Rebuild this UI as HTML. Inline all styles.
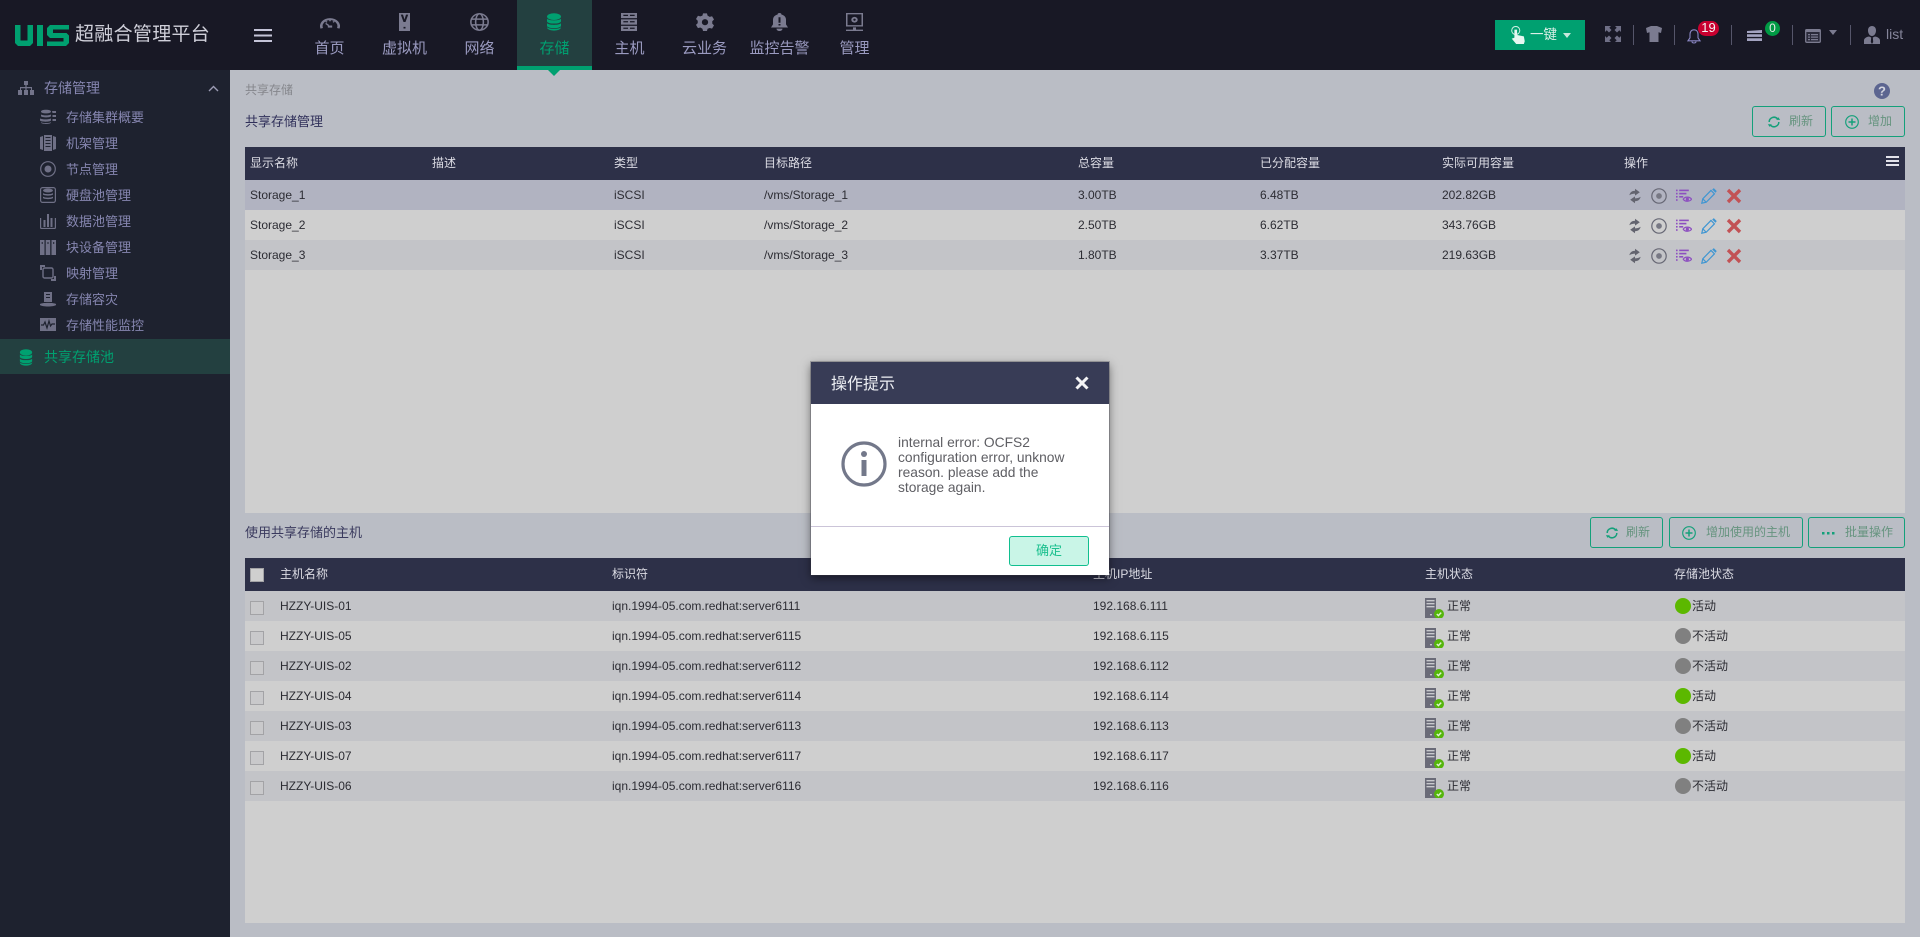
<!DOCTYPE html>
<html lang="zh"><head><meta charset="utf-8"><title>共享存储</title>
<style>
html,body{margin:0;padding:0;width:1920px;height:937px;overflow:hidden;background:#babdc5;font-family:"Liberation Sans","Noto Sans CJK SC",sans-serif;font-size:12px;color:#2c2c33}
div,span,svg{position:absolute;display:block}
.t{white-space:nowrap}
#hd{left:0;top:0;width:1920px;height:70px;background:#181825}
.nav{top:0;width:75px;height:70px;text-align:center;color:#9a9ac0;font-size:15px}
.nav span{left:0;width:75px;top:37px;line-height:23px}
.nav svg{top:13px;height:18px;fill:#7b7b90}
.sep{top:25px;width:1px;height:20px;background:#55556a}
#sb{left:0;top:70px;width:230px;height:867px;background:#1e222f}
.si{left:66px;color:#8686b0;font-size:13px;line-height:20px;white-space:nowrap}
.sic{left:40px;width:16px;height:16px;fill:#6f7086;color:#6f7086}
.th{left:245px;width:1660px;height:33px;background:#2d3048;color:#dcdce4}
.th span{top:0;line-height:32px;white-space:nowrap}
.r{left:245px;width:1660px;height:30px}
.r span{top:0;line-height:31px;white-space:nowrap}
.a{background:#c3c4c8}.b{background:#cfcfcf}
.btn{height:29px;border:1px solid #14a07a;border-radius:3px;color:#66947f;font-size:12px;box-sizing:content-box}
.btn span{top:0;line-height:29px;white-space:nowrap}
.btn svg{top:8px;width:14px;height:14px}
.cb{left:5px;top:10px;width:12px;height:12px;border:1px solid #a3a3a6;background:#c9c9cb}
.ic{top:8px;width:16px;height:16px}
.st{top:7px;width:20px;height:20px}
.dot{left:1429.5px;top:7px;width:16px;height:16px;border-radius:50%}
.g{background:#5cb800}.k{background:#808080}
</style></head><body>
<svg width="0" height="0" style="left:0;top:0">
<defs>
<symbol id="sync" viewBox="0 0 20 20"><path fill="#63646f" d="M3 9c.6-3.600 3.500-5.600 7-5.600V1l6 4.300-6 4.200V7C7.500 7 5 7.600 3 9zM17 11c-.6 3.600-3.500 5.600-7 5.600V19l-6-4.300 6-4.200V13c2.500 0 5-.6 7-2z"/></symbol>
<symbol id="circ" viewBox="0 0 20 20"><circle cx="10" cy="10" r="9" fill="none" stroke="#666774" stroke-width="1.500"/><circle cx="10" cy="10" r="3.600" fill="#777884"/></symbol>
<symbol id="leye" viewBox="0 0 20 20"><g fill="#8d4fc0"><rect x="0" y="2" width="2" height="2"/><rect x="4" y="2" width="12" height="2"/><rect x="0" y="6" width="2" height="2"/><rect x="4" y="6" width="9" height="2"/><rect x="0" y="10" width="2" height="2"/><rect x="4" y="10" width="5" height="2"/><rect x="0" y="14" width="2" height="2"/></g><path fill="none" stroke="#8d4fc0" stroke-width="1.500" d="M9 14c2-3.400 8-3.400 10.500 0-2.500 3.400-8.500 3.400-10.500 0z"/><circle cx="14.200" cy="14" r="2" fill="#8d4fc0"/></symbol>
<symbol id="pen" viewBox="0 0 20 20"><path fill="none" stroke="#3f96d2" stroke-width="1.500" d="M1 19l1.200-5.500L12.500 3l4.300 4.300L6.500 17.800z M2.200 13.500L6.500 17.800"/><path fill="#3f96d2" d="M14 1.800l2-1.600 3.700 3.700-1.600 2.100z"/></symbol>
<symbol id="xx" viewBox="0 0 20 20"><path fill="none" stroke="#c25255" stroke-width="4.200" d="M2.500 2.500l15 15M17.500 2.500L2.500 17.500"/></symbol>
<symbol id="srv" viewBox="0 0 20 20"><path fill="#6a6b78" d="M0 0h11v20H0z"/><path fill="#c8c9cd" d="M1.500 2h8v1.400h-8zM1.500 5h8v1.400h-8zM1.500 8h8v1.400h-8zM5 16h2v1.400H5z"/><circle cx="14" cy="16" r="5" fill="#55b50c"/><path fill="none" stroke="#dff2cc" stroke-width="1.500" d="M11.800 16l1.600 1.600 2.800-3"/></symbol>
<symbol id="ref" viewBox="0 0 16 16"><path fill="none" stroke="#14a07a" stroke-width="1.700" d="M2.500 8a5.500 5.500 0 0 1 9.500-3.700M13.500 8A5.500 5.500 0 0 1 4 11.700"/><path fill="#14a07a" d="M10.500 5.500h4.500L13 2.500zM5.500 10.500H1l2 3z"/></symbol>
<symbol id="plus" viewBox="0 0 16 16"><circle cx="8" cy="8" r="7.200" fill="none" stroke="#14a07a" stroke-width="1.300"/><path fill="none" stroke="#14a07a" stroke-width="1.700" d="M8 4v8M4 8h8"/></symbol>
<symbol id="db" viewBox="0 0 16 16"><ellipse cx="8" cy="3.200" rx="7" ry="3"/><path d="M1 5c1 2 13 2 14 0v2.500c-1 2.500-13 2.500-14 0zM1 9c1 2 13 2 14 0v2.500c-1 2.500-13 2.500-14 0zM1 12.500c1 2 13 2 14 0v.5c-1 3.500-13 3.500-14 0z"/></symbol>
</defs></svg>

<div id="hd"></div>
<svg style="left:15px;top:25px" width="54" height="21" viewBox="0 0 54 21"><path fill="#00a070" d="M0 0h5.500v15.500h7V0H18v18l-3 3H3l-3-3zM22 0h6v21h-6zM32 3l3-3h19v4.500H38V8h13.500L54 10.500V18l-3 3H32v-4.500h16.500V13H35l-3-3z"/></svg>
<div class="t" style="left:75px;top:22px;line-height:26px;font-size:19px;letter-spacing:.3px;color:#d0d0da">超融合管理平台</div>
<svg style="left:254px;top:29px" width="18" height="13"><path fill="#c4c4d8" d="M0 0h18v2H0zM0 5.500h18v2H0zM0 11h18v2H0z"/></svg>

<div class="nav" style="left:292px"><svg style="left:28px;top:15px;width:20px;height:14px" viewBox="2 1 23 20" preserveAspectRatio="none"><path fill="none" stroke="#7b7b90" stroke-width="3" d="M4 20a10 10 0 1 1 19 0"/><path fill="none" stroke="#7b7b90" stroke-width="1.800" d="M13.500 8v2M8.500 10l1.500 1.500M18.500 10L17 11.500M12 16l-3.500-3"/><path fill="#7b7b90" d="M11 16h5v3h-5z"/></svg><span>首页</span></div>
<div class="nav" style="left:367px"><svg style="left:32px;width:11px" viewBox="8.500 1 11 22" preserveAspectRatio="none"><path fill="#7b7b90" d="M8.500 1h11v22h-11z"/><path fill="#181825" d="M10.300 3h2.200l1.500 6 1.500-6h2.200L15 12h-2zM13 18h2v2h-2z"/></svg><span>虚拟机</span></div>
<div class="nav" style="left:442px"><svg style="left:28px;width:19px" viewBox="2.500 1 22 22" preserveAspectRatio="none"><g fill="none" stroke="#7b7b90" stroke-width="1.800"><circle cx="13.500" cy="12" r="10"/><ellipse cx="13.500" cy="12" rx="4.500" ry="10"/><path d="M3.500 8.500h20M3.500 15.500h20"/></g></svg><span>网络</span></div>
<div style="left:517px;top:0;width:75px;height:70px;background:#234040"></div>
<div style="left:517px;top:66px;width:75px;height:4px;background:#00a070"></div>
<div style="left:548px;top:70px;width:0;height:0;border:6px solid transparent;border-top-color:#00a070;border-bottom:0"></div>
<div class="nav" style="left:517px;color:#00a070"><svg viewBox="0 0 16 16" style="fill:#00a070;left:29px;width:16px" preserveAspectRatio="none"><use href="#db"/></svg><span>存储</span></div>
<div class="nav" style="left:592px"><svg style="left:29px;width:16px" viewBox="5 2 17 21" preserveAspectRatio="none"><path fill="#7b7b90" d="M5 2h17v6H5zM5 9.500h17v6H5zM5 17h17v6H5z"/><path fill="#181825" d="M7.500 4h5v1.500h-5zM14.500 4h5v1.500h-5zM7.500 11.500h5V13h-5zM14.500 11.500h5V13h-5zM7.500 19h5v1.500h-5zM14.500 19h5v1.500h-5z"/></svg><span>主机</span></div>
<div class="nav" style="left:667px"><svg style="left:28.500px;width:18px" viewBox="2 0.500 23 23.500" preserveAspectRatio="none"><path fill="#7b7b90" d="M11 1h5l.8 3 2.700 1.500 3-.8 2.500 4.300-2.200 2.200v3.200l2.200 2.200-2.500 4.300-3-.8L16.800 21l-.8 3h-5l-.8-3-2.700-1.500-3 .8L2 16l2.200-2.200v-3.200L2 8.400l2.500-4.300 3 .8L10.200 4z"/><circle cx="13.500" cy="12.500" r="4" fill="#181825"/></svg><span>云业务</span></div>
<div class="nav" style="left:742px"><svg style="left:29px;width:17px" viewBox="5 1 17 23" preserveAspectRatio="none"><path fill="#7b7b90" d="M13.500 1c1.200 0 2 .8 2 2 3 .8 4.500 3.500 4.500 6.500v6l2 4H5l2-4v-6C7 6.500 8.500 3.800 11.500 3c0-1.200.8-2 2-2zM10.500 21h6c0 2-1.300 3-3 3s-3-1-3-3z"/><path fill="#181825" d="M12.500 6.500h2v7h-2zM12.500 15h2v2h-2z"/></svg><span>监控告警</span></div>
<div class="nav" style="left:817px"><svg style="left:29px;width:17px" viewBox="5 2 17 20" preserveAspectRatio="none"><path fill="#7b7b90" d="M5 2h17v15H5zM12 18h3v2.500h7V22H5v-1.500h7z"/><path fill="#181825" d="M6.500 3.500h14v12h-14z"/><circle cx="13.500" cy="9.500" r="3.200" fill="#7b7b90"/><circle cx="13.500" cy="9.500" r="1.200" fill="#181825"/></svg><span>管理</span></div>

<div style="left:1495px;top:20px;width:90px;height:30px;background:#00a070"></div>
<svg style="left:1510px;top:26px" width="16" height="18" viewBox="0 0 16 20"><circle cx="5.500" cy="5" r="4.500" fill="none" stroke="#cfeee3" stroke-width="1.100"/><path fill="#e6f7f1" d="M4 4h3v6l7.500 1.500L15.500 17l-1 3H6l-5-6 3-1z"/></svg>
<div class="t" style="left:1530px;top:24px;line-height:21px;font-size:13.500px;color:#dcefe8">一键</div>
<div style="left:1563px;top:33px;width:0;height:0;border:4px solid transparent;border-top:5px solid #c8e8dc;border-bottom:0"></div>
<svg style="left:1605px;top:26px" width="16" height="16" viewBox="0 0 16 16"><path fill="#6f6f86" d="M0 0h6L4.300 1.700 6.500 4 4 6.500 1.700 4.300 0 6zM16 0v6l-1.700-1.700L12 6.500 9.500 4l2.200-2.300L10 0zM16 16h-6l1.700-1.700L9.500 12l2.500-2.500 2.300 2.200L16 10zM0 16v-6l1.700 1.700L4 9.500 6.500 12l-2.200 2.300L6 16z"/></svg>
<div class="sep" style="left:1633px"></div>
<svg style="left:1646px;top:26px" width="16" height="16" viewBox="0 0 16 16"><path fill="#7b7b90" d="M5 0h6l5 2-1 5-2.500-.8V16H3.500V6.200L1 7 0 2z"/></svg>
<div class="sep" style="left:1674px"></div>
<svg style="left:1687px;top:29px" width="14" height="15" viewBox="0 0 14 15"><path fill="none" stroke="#8a86c4" stroke-width="1.100" d="M7 .8c2.700 0 4 2 4 4.500v3.500l2 3H1l2-3V5.300C3 2.800 4.300.8 7 .8zM5 12.500c0 2 4 2 4 0"/></svg>
<div style="left:1698px;top:21px;width:21px;height:15px;border-radius:7.500px;background:#c8002f;color:#f4f4f4;text-align:center;line-height:14px;font-size:13px">19</div>
<div class="sep" style="left:1731px"></div>
<svg style="left:1747px;top:30px" width="15" height="11" viewBox="0 0 15 11"><path fill="#a3a3c0" d="M0 1l15-1v3H0zM0 4.200h15v2.700H0zM0 8.200h15V11H0z"/></svg>
<div style="left:1765px;top:21px;width:15px;height:15px;border-radius:7.500px;background:#009a44;color:#e8e8e8;text-align:center;line-height:14px;font-size:12px">0</div>
<div class="sep" style="left:1792px"></div>
<svg style="left:1805px;top:29px" width="16" height="14" viewBox="0 0 16 14"><rect x=".7" y=".7" width="14.600" height="12.600" rx="1" fill="#2a2a3a" stroke="#7b7b90" stroke-width="1.300"/><path fill="#7b7b90" d="M1 1h14v2H1zM3 5h2v1.200H3zM6 5h7v1.200H6zM3 7.500h2v1.200H3zM6 7.500h7v1.200H6zM3 10h2v1.200H3zM6 10h7v1.200H6z"/></svg>
<div style="left:1829px;top:30px;width:0;height:0;border:4.500px solid transparent;border-top:5px solid #7b7b90;border-bottom:0"></div>
<div class="sep" style="left:1850px"></div>
<svg style="left:1864px;top:26px" width="16" height="18" viewBox="0 0 16 18"><path fill="#7b7b90" d="M8 0c2.500 0 4 1.800 4 4.500S10.500 10 8 10 4 7.200 4 4.500 5.500 0 8 0zM5 10.500l2.200 1L6.800 16l1.200 2 1.200-2-.4-4.500 2.200-1c3 .5 5 2 5 4V18H0v-3.500c0-2 2-3.500 5-4z"/></svg>
<div class="t" style="left:1886px;top:24px;line-height:20px;font-size:14px;color:#85859a">list</div>

<div id="sb"></div>
<div class="t" style="left:44px;top:78px;line-height:20px;font-size:14px;color:#8686b0">存储管理</div>
<svg style="left:18px;top:81px" width="16" height="14" viewBox="0 0 16 14" ><path fill="#73748a" d="M6 0h4v4H8.600v2H14v3h2v5h-4V9h1V7.200H8.600V9H10v5H6V9h1.400V7.200H3V9h1v5H0V9h2V6h5.400V4H6z"/></svg>
<svg style="left:208px;top:85px" width="11" height="7" viewBox="0 0 11 7"><path fill="none" stroke="#9c9cb4" stroke-width="1.400" d="M1 6l4.500-4.500L10 6"/></svg>

<svg class="sic" style="top:109px" viewBox="0 0 16 16"><path d="M6 .8c3 0 5 .8 5 1.800S9 4.400 6 4.400 1 3.600 1 2.600 3 .8 6 .8zM1 5.500c2 1.200 8 1.200 10 0v1.800c-1 1.500-9 1.500-10 0zM0 9.500c2.500 1.200 8.500 1.200 11 0v2c-1 1.600-10 1.600-11 0zM1 13.200c2 1 8 1 10 0v.6c-1 1.600-9 1.600-10 0zM12 2h4v2h-3.500zM12.500 6H16v2h-3.500zM12.500 10H16v2h-3.500z"/></svg>
<div class="si" style="top:108px">存储集群概要</div>
<svg class="sic" style="top:135px" viewBox="0 0 16 16"><path d="M0 2l3-1v14l-3-1zM16 2l-3-1v14l3-1zM4 0h8v16H4z"/><path fill="#1e222f" d="M5.500 2h5v1h-5zM5.500 5h5v1h-5zM5.500 8h5v1h-5zM5.500 11h5v1h-5z"/></svg>
<div class="si" style="top:134px">机架管理</div>
<svg class="sic" style="top:161px" viewBox="0 0 16 16"><circle cx="8" cy="8" r="7.300" fill="none" stroke="#6f7086" stroke-width="1.200"/><circle cx="8" cy="8" r="3.500"/></svg>
<div class="si" style="top:160px">节点管理</div>
<svg class="sic" style="top:187px" viewBox="0 0 16 16"><rect x=".6" y=".6" width="14.800" height="14.800" rx="2" fill="none" stroke="#6f7086" stroke-width="1.200"/><ellipse cx="8" cy="3.500" rx="5" ry="2"/><path d="M3 6c1 1.500 9 1.500 10 0v1.500c-1 1.500-9 1.500-10 0zM3 9.500c1 1.500 9 1.500 10 0V11c-1 1.500-9 1.500-10 0z"/></svg>
<div class="si" style="top:186px">硬盘池管理</div>
<svg class="sic" style="top:213px" viewBox="0 0 16 16"><path fill="none" stroke="#6f7086" stroke-width="1.200" d="M.6 5v9.500a1 1 0 0 0 1 1h12.800a1 1 0 0 0 1-1V5"/><path d="M3.500 7h2v7h-2zM7 1h2v13H7zM10.500 5h2v9h-2z"/></svg>
<div class="si" style="top:212px">数据池管理</div>
<svg class="sic" style="top:239px" viewBox="0 0 16 16"><path d="M0 1h4.500v15H0zM5.700 1h4.500v15H5.700zM11.500 1H16v15h-4.500z"/><path fill="#1e222f" d="M1.700 3h1v2h-1zM7.500 3h1v2h-1zM13.200 3h1v2h-1z"/></svg>
<div class="si" style="top:238px">块设备管理</div>
<svg class="sic" style="top:265px" viewBox="0 0 16 16"><path d="M0 0h5v2H2v3H0zM16 16h-5v-2h3v-3h2z"/><rect x="3" y="3" width="10" height="10" rx="1.500" fill="none" stroke="#6f7086" stroke-width="1.400"/></svg>
<div class="si" style="top:264px">映射管理</div>
<svg class="sic" style="top:291px" viewBox="0 0 16 16"><path d="M4 1h8v10H4z"/><path fill="#1e222f" d="M6 3h4v1H6zM6 6h4v1H6z"/><path d="M0 13c2-1.500 14-1.500 16 0v1c-2 2-14 2-16 0z"/></svg>
<div class="si" style="top:290px">存储容灾</div>
<svg class="sic" style="top:317px" viewBox="0 0 16 16"><path d="M0 1h16v13H0z"/><path fill="none" stroke="#1e222f" stroke-width="1.200" d="M1 8h2.500l1.500-3 2 6 2-7 1.500 5 1.500-2H15"/></svg>
<div class="si" style="top:316px">存储性能监控</div>

<div style="left:0;top:339px;width:230px;height:35px;background:#234040"></div>
<svg style="left:19px;top:349px;fill:#00a070" width="14" height="17" viewBox="0 0 16 16" preserveAspectRatio="none"><use href="#db"/></svg>
<div class="t" style="left:44px;top:347px;line-height:20px;font-size:14px;color:#00a070">共享存储池</div>

<div class="t" style="left:245px;top:81px;line-height:18px;color:#85868c">共享存储</div>
<svg style="left:1874px;top:83px" width="16" height="16" viewBox="0 0 16 16"><circle cx="8" cy="8" r="8" fill="#5c6590"/><text x="8" y="12.500" font-size="13" font-weight="bold" font-family="Liberation Sans" fill="#d4d6e0" text-anchor="middle">?</text></svg>
<div class="t" style="left:245px;top:112px;line-height:20px;font-size:13px;color:#30305a">共享存储管理</div>

<div class="btn" style="left:1752px;top:106px;width:72px"><svg style="left:14px"><use href="#ref"/></svg><span style="left:36px">刷新</span></div>
<div class="btn" style="left:1831px;top:106px;width:72px"><svg style="left:13px"><use href="#plus"/></svg><span style="left:36px">增加</span></div>

<div style="left:245px;top:147px;width:1660px;height:366px;background:#cfcfcf"></div>
<div class="th" style="top:147px">
<span style="left:5px">显示名称</span><span style="left:187px">描述</span><span style="left:369px">类型</span><span style="left:519px">目标路径</span><span style="left:833px">总容量</span><span style="left:1015px">已分配容量</span><span style="left:1197px">实际可用容量</span><span style="left:1379px">操作</span>
<svg style="left:1641px;top:9px" width="13" height="10"><path fill="#e2e2ea" d="M0 0h13v2H0zM0 4h13v2H0zM0 8h13v2H0z"/></svg></div>

<div class="r" style="top:180px;background:#b1b3c1"><span style="left:5px">Storage_1</span><span style="left:369px">iSCSI</span><span style="left:519px">/vms/Storage_1</span><span style="left:833px">3.00TB</span><span style="left:1015px">6.48TB</span><span style="left:1197px">202.82GB</span><svg class="ic" style="left:1381.500px"><use href="#sync"/></svg><svg class="ic" style="left:1406px"><use href="#circ"/></svg><svg class="ic" style="left:1431px"><use href="#leye"/></svg><svg class="ic" style="left:1456px"><use href="#pen"/></svg><svg class="ic" style="left:1481px"><use href="#xx"/></svg></div>
<div class="r b" style="top:210px"><span style="left:5px">Storage_2</span><span style="left:369px">iSCSI</span><span style="left:519px">/vms/Storage_2</span><span style="left:833px">2.50TB</span><span style="left:1015px">6.62TB</span><span style="left:1197px">343.76GB</span><svg class="ic" style="left:1381.500px"><use href="#sync"/></svg><svg class="ic" style="left:1406px"><use href="#circ"/></svg><svg class="ic" style="left:1431px"><use href="#leye"/></svg><svg class="ic" style="left:1456px"><use href="#pen"/></svg><svg class="ic" style="left:1481px"><use href="#xx"/></svg></div>
<div class="r a" style="top:240px"><span style="left:5px">Storage_3</span><span style="left:369px">iSCSI</span><span style="left:519px">/vms/Storage_3</span><span style="left:833px">1.80TB</span><span style="left:1015px">3.37TB</span><span style="left:1197px">219.63GB</span><svg class="ic" style="left:1381.500px"><use href="#sync"/></svg><svg class="ic" style="left:1406px"><use href="#circ"/></svg><svg class="ic" style="left:1431px"><use href="#leye"/></svg><svg class="ic" style="left:1456px"><use href="#pen"/></svg><svg class="ic" style="left:1481px"><use href="#xx"/></svg></div>

<div class="t" style="left:245px;top:523px;line-height:20px;font-size:13px;color:#3a3a5e">使用共享存储的主机</div>
<div class="btn" style="left:1590px;top:517px;width:71px"><svg style="left:14px"><use href="#ref"/></svg><span style="left:35px">刷新</span></div>
<div class="btn" style="left:1669px;top:517px;width:132px"><svg style="left:12px"><use href="#plus"/></svg><span style="left:36px">增加使用的主机</span></div>
<div class="btn" style="left:1808px;top:517px;width:95px"><svg style="left:12px"><path fill="#14a07a" d="M1 6h2.500v2.500H1zM6 6h2.500v2.500H6zM11 6h2.500v2.500H11z"/></svg><span style="left:36px">批量操作</span></div>

<div style="left:245px;top:558px;width:1660px;height:365px;background:#cfcfcf"></div>
<div class="th" style="top:558px"><div style="left:5px;top:10px;width:12px;height:12px;border:1px solid #a3a3a6;background:#cfcfcf"></div><span style="left:35px">主机名称</span><span style="left:367px">标识符</span><span style="left:848px">主机IP地址</span><span style="left:1180px">主机状态</span><span style="left:1429px">存储池状态</span></div>

<div class="r a" style="top:591px"><div class="cb"></div><span style="left:35px">HZZY-UIS-01</span><span style="left:367px">iqn.1994-05.com.redhat:server6111</span><span style="left:848px">192.168.6.111</span><svg class="st" style="left:1180px"><use href="#srv"/></svg><span style="left:1202px">正常</span><div class="dot g"></div><span style="left:1447px">活动</span></div>
<div class="r b" style="top:621px"><div class="cb"></div><span style="left:35px">HZZY-UIS-05</span><span style="left:367px">iqn.1994-05.com.redhat:server6115</span><span style="left:848px">192.168.6.115</span><svg class="st" style="left:1180px"><use href="#srv"/></svg><span style="left:1202px">正常</span><div class="dot k"></div><span style="left:1447px">不活动</span></div>
<div class="r a" style="top:651px"><div class="cb"></div><span style="left:35px">HZZY-UIS-02</span><span style="left:367px">iqn.1994-05.com.redhat:server6112</span><span style="left:848px">192.168.6.112</span><svg class="st" style="left:1180px"><use href="#srv"/></svg><span style="left:1202px">正常</span><div class="dot k"></div><span style="left:1447px">不活动</span></div>
<div class="r b" style="top:681px"><div class="cb"></div><span style="left:35px">HZZY-UIS-04</span><span style="left:367px">iqn.1994-05.com.redhat:server6114</span><span style="left:848px">192.168.6.114</span><svg class="st" style="left:1180px"><use href="#srv"/></svg><span style="left:1202px">正常</span><div class="dot g"></div><span style="left:1447px">活动</span></div>
<div class="r a" style="top:711px"><div class="cb"></div><span style="left:35px">HZZY-UIS-03</span><span style="left:367px">iqn.1994-05.com.redhat:server6113</span><span style="left:848px">192.168.6.113</span><svg class="st" style="left:1180px"><use href="#srv"/></svg><span style="left:1202px">正常</span><div class="dot k"></div><span style="left:1447px">不活动</span></div>
<div class="r b" style="top:741px"><div class="cb"></div><span style="left:35px">HZZY-UIS-07</span><span style="left:367px">iqn.1994-05.com.redhat:server6117</span><span style="left:848px">192.168.6.117</span><svg class="st" style="left:1180px"><use href="#srv"/></svg><span style="left:1202px">正常</span><div class="dot g"></div><span style="left:1447px">活动</span></div>
<div class="r a" style="top:771px"><div class="cb"></div><span style="left:35px">HZZY-UIS-06</span><span style="left:367px">iqn.1994-05.com.redhat:server6116</span><span style="left:848px">192.168.6.116</span><svg class="st" style="left:1180px"><use href="#srv"/></svg><span style="left:1202px">正常</span><div class="dot k"></div><span style="left:1447px">不活动</span></div>

<div style="left:811px;top:362px;width:298px;height:213px;background:#fff;box-shadow:0 0 0 1px rgba(60,60,70,.3),0 3px 9px rgba(0,0,0,.5)">
<div style="left:0;top:0;width:298px;height:42px;background:#383c56"></div>
<div class="t" style="left:20px;top:12px;line-height:22px;font-size:16px;color:#eef0f4">操作提示</div>
<svg style="left:264px;top:14px" width="14" height="14" viewBox="0 0 14 14"><path fill="none" stroke="#f4f4f6" stroke-width="3" d="M1.500 1.500l11 11M12.500 1.500l-11 11"/></svg>
<svg style="left:30px;top:79px" width="46" height="46" viewBox="0 0 46 46"><circle cx="23" cy="23" r="21" fill="none" stroke="#73788a" stroke-width="3.200"/><circle cx="23" cy="13" r="3" fill="#73788a"/><rect x="20.500" y="19" width="5" height="16" fill="#73788a"/></svg>
<div style="left:87px;top:73px;width:190px;font-size:13.800px;line-height:15px;color:#5e5e63">internal error: OCFS2<br>configuration error, unknow<br>reason. please add the<br>storage again.</div>
<div style="left:0;top:164px;width:298px;height:1px;background:#cbc4d8"></div>
<div style="left:198px;top:174px;width:78px;height:28px;background:#c9f5e7;border:1px solid #10bf8f;border-radius:3px;color:#1cc08f;text-align:center;line-height:28px;font-size:13px">确定</div>
</div>
</body></html>
